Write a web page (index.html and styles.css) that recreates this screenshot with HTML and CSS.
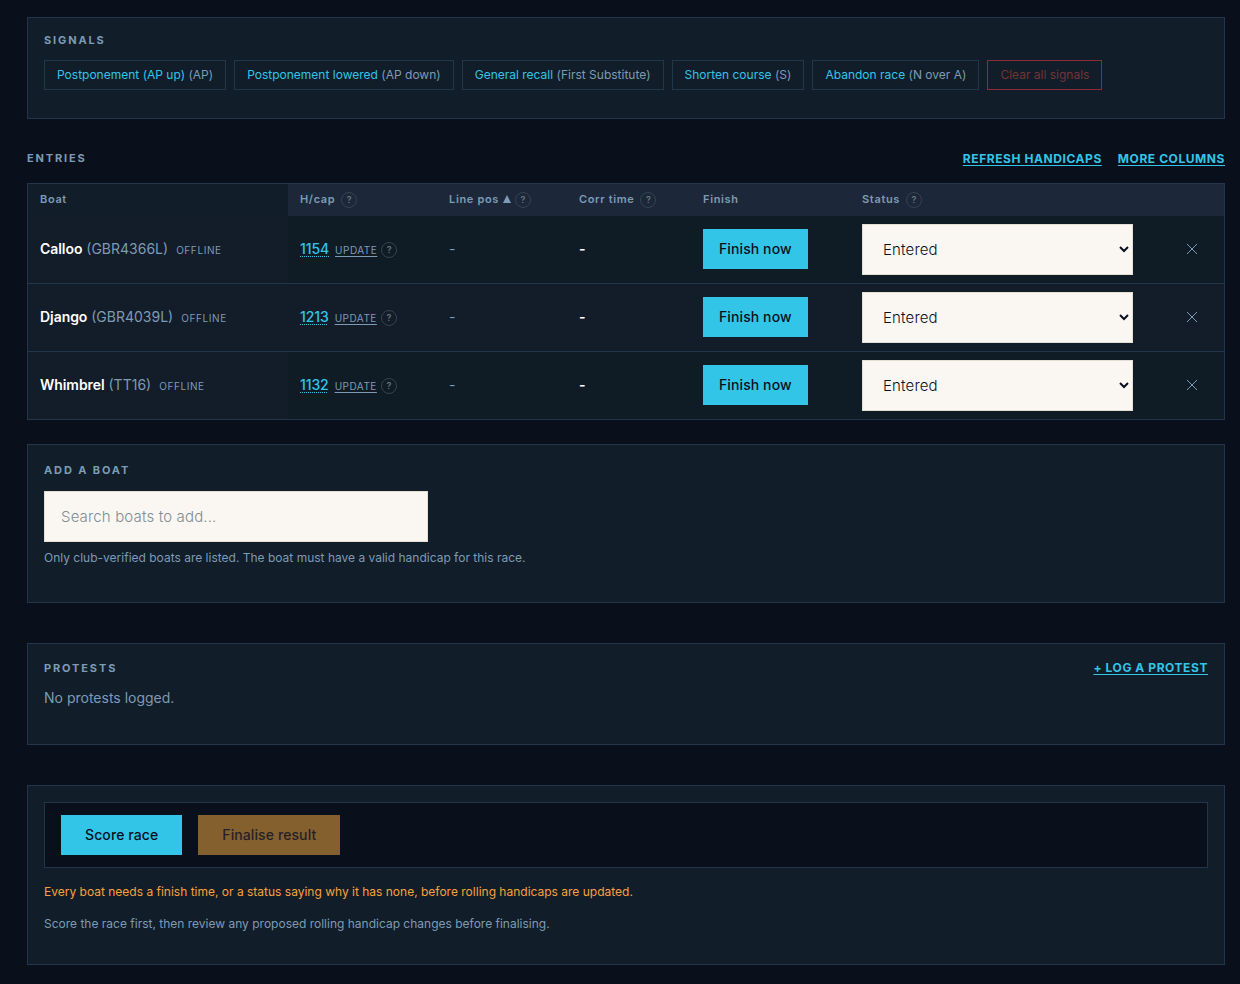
FILE: index.html
```html
<!DOCTYPE html>
<html lang="en">
<head>
  <meta charset="UTF-8">
  <meta name="viewport" content="width=device-width, initial-scale=1.0">
  <title>Race entries</title>
  <link rel="stylesheet" href="styles.css">
</head>
<body>
  <main class="page">
    <section class="panel signals">
      <h2 class="label">Signals</h2>
      <div class="signal-list">
        <button class="signal">Postponement (AP up) <span>(AP)</span></button>
        <button class="signal">Postponement lowered <span>(AP down)</span></button>
        <button class="signal">General recall <span>(First Substitute)</span></button>
        <button class="signal">Shorten course <span>(S)</span></button>
        <button class="signal">Abandon race <span>(N over A)</span></button>
        <button class="signal clear" disabled>Clear all signals</button>
      </div>
    </section>

    <section class="entries">
      <div class="entries-head">
        <h2 class="label">Entries</h2>
        <div class="links">
          <a class="link" href="#">Refresh handicaps</a>
          <a class="link" href="#">More columns</a>
        </div>
      </div>
      <table class="entry-table">
        <colgroup>
          <col class="col-boat"><col class="col-hcap"><col class="col-pos"><col class="col-corr"><col class="col-finish"><col class="col-status"><col>
        </colgroup>
        <thead>
          <tr>
            <th>Boat</th>
            <th>H/cap <span class="help">?</span></th>
            <th>Line pos<svg class="sort" width="8" height="8" viewBox="0 0 8 8"><path d="M4 0 8 8H0z"/></svg><span class="help tight">?</span></th>
            <th>Corr time <span class="help">?</span></th>
            <th>Finish</th>
            <th>Status <span class="help">?</span></th>
            <th></th>
          </tr>
        </thead>
        <tbody>
          <tr>
            <td><b class="boat">Calloo</b> <span class="sail">(GBR4366L)</span><span class="offline">Offline</span></td>
            <td><span class="hcap">1154</span><a class="update" href="#">Update</a><span class="help tight">?</span></td>
            <td class="muted">-</td>
            <td class="corr">-</td>
            <td><button class="btn">Finish now</button></td>
            <td><select class="field"><option>Entered</option></select></td>
            <td><button class="remove" aria-label="Remove"><svg width="10" height="10" viewBox="0 0 10 10"><path d="M0 0l10 10M10 0L0 10"/></svg></button></td>
          </tr>
          <tr>
            <td><b class="boat">Django</b> <span class="sail">(GBR4039L)</span><span class="offline">Offline</span></td>
            <td><span class="hcap">1213</span><a class="update" href="#">Update</a><span class="help tight">?</span></td>
            <td class="muted">-</td>
            <td class="corr">-</td>
            <td><button class="btn">Finish now</button></td>
            <td><select class="field"><option>Entered</option></select></td>
            <td><button class="remove" aria-label="Remove"><svg width="10" height="10" viewBox="0 0 10 10"><path d="M0 0l10 10M10 0L0 10"/></svg></button></td>
          </tr>
          <tr>
            <td><b class="boat">Whimbrel</b> <span class="sail">(TT16)</span><span class="offline">Offline</span></td>
            <td><span class="hcap">1132</span><a class="update" href="#">Update</a><span class="help tight">?</span></td>
            <td class="muted">-</td>
            <td class="corr">-</td>
            <td><button class="btn">Finish now</button></td>
            <td><select class="field"><option>Entered</option></select></td>
            <td><button class="remove" aria-label="Remove"><svg width="10" height="10" viewBox="0 0 10 10"><path d="M0 0l10 10M10 0L0 10"/></svg></button></td>
          </tr>
        </tbody>
      </table>
    </section>

    <section class="panel add-boat">
      <h2 class="label">Add a boat</h2>
      <input class="field" type="text" placeholder="Search boats to add...">
      <p class="note">Only club-verified boats are listed. The boat must have a valid handicap for this race.</p>
    </section>

    <section class="panel protests">
      <div class="protests-head">
        <h2 class="label">Protests</h2>
        <a class="link" href="#">+ Log a protest</a>
      </div>
      <p class="empty">No protests logged.</p>
    </section>

    <section class="panel result">
      <div class="actions">
        <button class="btn wide">Score race</button>
        <button class="btn wide finalise" disabled>Finalise result</button>
      </div>
      <p class="note warning">Every boat needs a finish time, or a status saying why it has none, before rolling handicaps are updated.</p>
      <p class="note">Score the race first, then review any proposed rolling handicap changes before finalising.</p>
    </section>
  </main>
</body>
</html>
```
FILE: styles.css
```css
* {
  box-sizing: border-box;
}
body {
  margin: 0;
  background: #09101b;
  color: #fff;
  font-family: Inter, sans-serif;
  font-size: 14px;
  line-height: 20px;
}
button, input, select {
  font-family: inherit;
  margin: 0;
}
h2, p {
  margin: 0;
}
.page {
  padding: 17px 15px 0 27px;
}
.panel {
  background: #111d29;
  border: 1px solid #22354b;
  padding: 16px;
}
.label {
  color: #7d9bb5;
  font-size: 11px;
  font-weight: 700;
  line-height: 16px;
  letter-spacing: 1.87px;
  text-transform: uppercase;
}

/* signals */
.signals {
  height: 102px;
  padding-top: 14px;
}
.signal-list {
  display: flex;
  gap: 8px;
  margin-top: 12px;
}
.signal {
  height: 30px;
  padding: 0 12px 2px;
  background: transparent;
  border: 1px solid #22354b;
  color: #33c5e8;
  font-size: 12px;
  font-weight: 400;
  letter-spacing: 0.004px;
  white-space: nowrap;
}
.signal span {
  color: #7d9bb5;
}
.signal.clear {
  border-color: #8b2d38;
  color: #753336;
}

/* entries */
.entries {
  margin-top: 31px;
}
.entries-head {
  display: flex;
  justify-content: space-between;
  height: 33px;
}
.links {
  display: flex;
  gap: 16px;
}
.link {
  color: #33c5e8;
  font-size: 12px;
  font-weight: 700;
  line-height: 18px;
  letter-spacing: 0.57px;
  text-transform: uppercase;
  text-decoration: underline;
  text-underline-offset: 2px;
}
.entry-table {
  width: 100%;
  table-layout: fixed;
  border: 1px solid #22354b;
  border-bottom: 0;
  border-spacing: 0;
}
.col-boat { width: 260px; }
.col-hcap { width: 149px; }
.col-pos { width: 130px; }
.col-corr { width: 124px; }
.col-finish { width: 159px; }
.col-status { width: 295px; }
th {
  height: 32px;
  padding: 0 12px 2px;
  background: #1c2839;
  color: #7d9bb5;
  font-size: 11px;
  font-weight: 600;
  line-height: 16px;
  letter-spacing: 0.66px;
  text-align: left;
  white-space: nowrap;
}
th:first-child {
  background: #111d29;
}
td {
  height: 68px;
  padding: 0 12px;
  background: #0f1c26;
  border-bottom: 1px solid #22354b;
  white-space: nowrap;
}
td:first-child, tr:nth-child(even) td {
  background: #131c29;
}
.help {
  display: inline-block;
  width: 16px;
  height: 16px;
  margin-left: 2.5px;
  border: 1px solid #34434f;
  border-radius: 50%;
  color: #68757c;
  font-size: 9px;
  font-weight: 600;
  line-height: 14px;
  letter-spacing: 0;
  text-align: center;
  vertical-align: middle;
}
.help.tight {
  margin-left: 4px;
}
.sort {
  margin-left: 4px;
  fill: #7d9bb5;
}
.boat {
  font-weight: 600;
  letter-spacing: -0.06px;
}
.sail, .muted {
  color: #7d9bb5;
}
.offline {
  margin-left: 8px;
  color: #7d9bb5;
  font-size: 10px;
  letter-spacing: 0.6px;
  text-transform: uppercase;
}
.hcap {
  color: #33c5e8;
  font-weight: 500;
  letter-spacing: -0.1px;
  text-decoration: underline dotted 1px;
  text-underline-offset: 2px;
}
.update {
  margin-left: 6px;
  color: #7d9bb5;
  font-size: 10px;
  letter-spacing: 0.5px;
  text-transform: uppercase;
  text-underline-offset: 2px;
}
.corr {
  font-weight: 600;
}
td.muted, td.corr {
  padding-bottom: 1px;
}
.btn {
  display: block;
  height: 40px;
  padding: 0 16px 2px;
  background: #33c5e8;
  border: 0;
  color: #09101b;
  font-size: 14px;
  font-weight: 500;
  letter-spacing: 0.1px;
}
td .btn {
  margin-bottom: 1px;
}
.field {
  display: block;
  width: 100%;
  height: 51px;
  padding: 0 16px;
  background: #faf7f2;
  border: 1px solid #e5dfd3;
  border-radius: 0;
  color: #09101b;
  font-size: 15px;
  font-weight: 300;
  letter-spacing: 0.15px;
}
.remove {
  display: block;
  margin: 0 0 1px 25px;
  padding: 5px;
  background: none;
  border: 0;
}
.remove svg {
  display: block;
  overflow: visible;
  fill: none;
  stroke: #7d9bb5;
}

/* add a boat */
.add-boat {
  height: 159px;
  margin-top: 24px;
  padding-top: 17px;
}
.add-boat .field {
  width: 384px;
  margin-top: 13px;
}
.field::placeholder {
  color: #7f8d92;
}
.note {
  color: #7d9bb5;
  font-size: 12px;
  line-height: 16px;
}
.add-boat .note {
  margin-top: 8px;
}

/* protests */
.protests {
  height: 102px;
  margin-top: 40px;
}
.protests-head {
  display: flex;
  justify-content: space-between;
}
.protests .link {
  line-height: 16px;
}
.empty {
  margin-top: 12px;
  color: #7d9bb5;
}

/* scoring */
.result {
  height: 180px;
  margin-top: 40px;
}
.actions {
  display: flex;
  gap: 16px;
  padding: 12px 16px;
  background: #09101b;
  border: 1px solid #22354b;
}
.btn.wide {
  padding: 0 24px 2px;
}
.btn.finalise {
  background: #85602f;
  color: #271f28;
}
.result .note {
  margin-top: 16px;
}
.result .warning {
  color: #f9a03c;
}
```
